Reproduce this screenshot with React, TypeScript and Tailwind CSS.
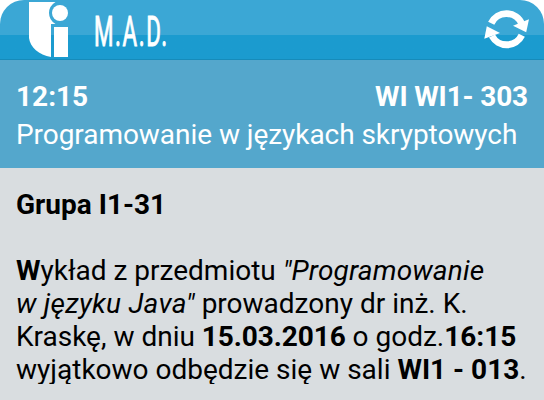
function Logo() {
  return (
    <svg className="ml-[29px] h-[58px] w-[39px] shrink-0" viewBox="0 0 39 58" fill="#fff">
      <path d="M0 2H26.5Q20 6 20 13Q20 20 26.5 24L22 24V57C10 55 1 47 0 38Z" />
      <circle cx="31" cy="13" r="8" />
      <path d="M25 27H39V57H25Z" />
    </svg>
  );
}

function RefreshIcon() {
  return (
    <svg className="h-[40px] w-[44px] overflow-visible" viewBox="0 0 44 40" fill="none">
      <path d="M6.2 14.2A16.7 16.7 0 0 1 36.8 15" stroke="#fff" strokeWidth="6.8" />
      <path d="M36.8 26.2A16.7 16.7 0 0 1 7 27" stroke="#fff" strokeWidth="6.8" />
      <path d="M28 16.8L44 10.2L41.2 23.2Z" fill="#fff" />
      <path d="M-0.7 29.8L1.8 17.2L15 24Z" fill="#fff" />
    </svg>
  );
}

export default function App() {
  return (
    <div className="h-[400px] w-[544px] overflow-hidden bg-white font-[Roboto,sans-serif] text-[28px] leading-[33px]">
      <header className="flex h-[60px] items-start justify-between rounded-t-[24px] border-b border-[#168bba] bg-linear-to-b from-[#3ba7d5] from-[35px] to-[#1b9bcf] to-[35px]">
        <div className="flex">
          <Logo />
          <h1 className="ml-[26px] w-[80px] origin-left scale-x-[0.52] pt-[7px] text-[43px] leading-[48px] font-normal tracking-[3px] whitespace-nowrap text-white [-webkit-text-stroke:1px_white]">
            M.A.D.
          </h1>
        </div>
        <button aria-label="Odśwież" className="mt-[9px] mr-[15px]">
          <RefreshIcon />
        </button>
      </header>
      <section className="h-[108px] bg-[#54a7cc] px-4 pt-5 text-white">
        <div className="flex justify-between font-bold">
          <span>12:15</span>
          <span className="tracking-[-0.15px]">WI WI1- 303</span>
        </div>
        <p className="mt-[5px] tracking-[-0.05px] whitespace-nowrap">Programowanie w językach skryptowych</p>
      </section>
      <section className="h-[232px] bg-[#d9dde0] px-4 pt-5 text-black">
        <div className="h-[196px] overflow-hidden whitespace-nowrap">
          <h2 className="font-bold">Grupa I1-31</h2>
          <p className="mt-[33px]">
            <b>W</b>ykład z przedmiotu <i className="tracking-[0.15px]">"Programowanie</i>
            <br />
            <i className="tracking-[0.25px]">w języku Java"</i> prowadzony dr inż. K.
            <br />
            Kraskę, w dniu <b className="tracking-[-0.1px]">15.03.2016</b> o godz.<b>16:15</b>
            <br />
            wyjątkowo odbędzie się w sali <b>WI1 - 013</b>.
          </p>
        </div>
      </section>
    </div>
  );
}
